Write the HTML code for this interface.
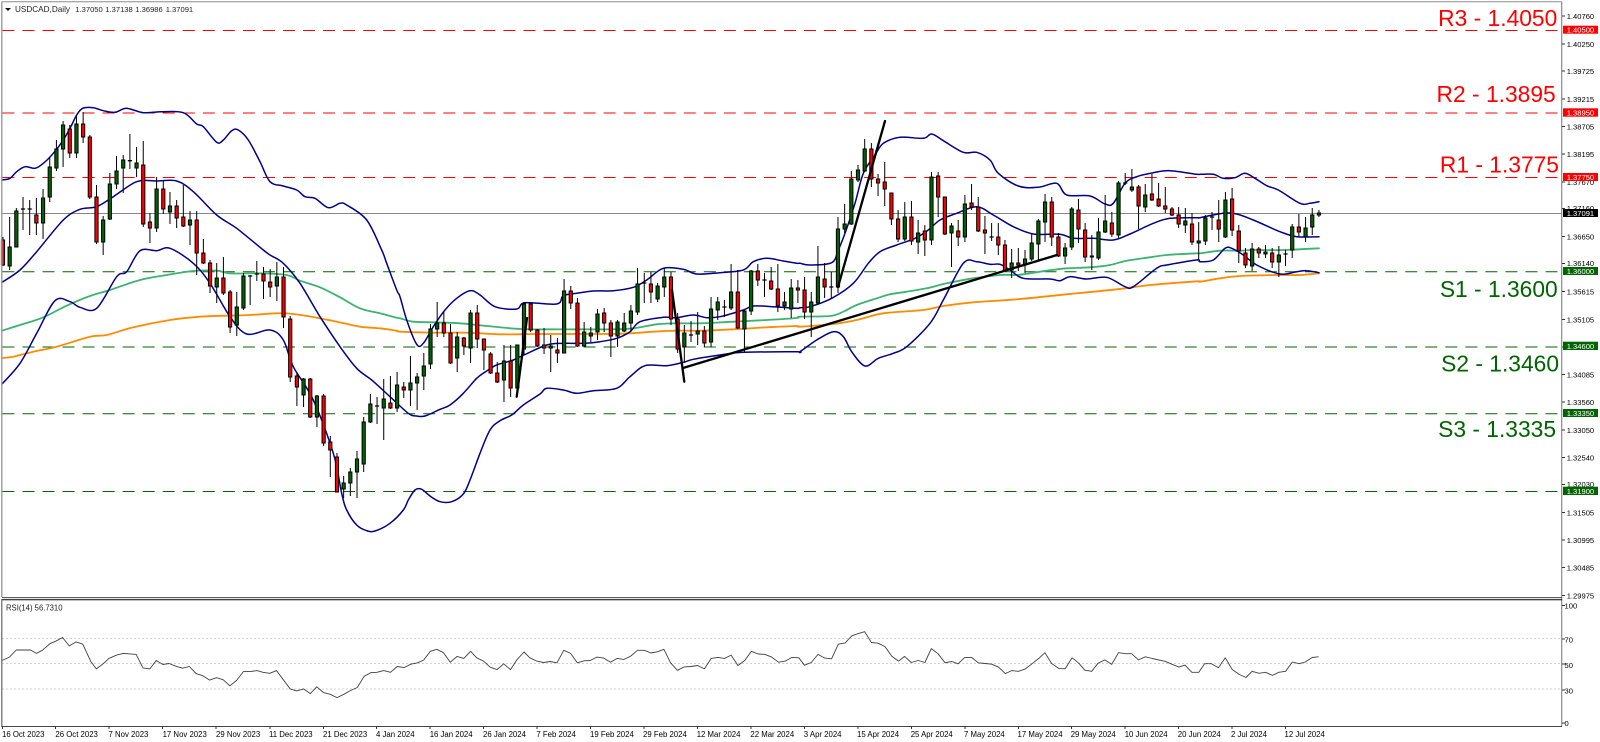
<!DOCTYPE html>
<html><head><meta charset="utf-8"><title>USDCAD,Daily</title>
<style>
html,body{margin:0;padding:0;background:#fff;width:1600px;height:742px;overflow:hidden}
svg{position:absolute;left:0;top:0;display:block}
text{font-family:"Liberation Sans",sans-serif}
.a{font-size:7.6px;fill:#000}
.t{font-size:7.6px;fill:#fff}
.d{font-size:7.8px;fill:#000}
.b{font-size:22.8px;text-anchor:end}
</style></head><body>
<svg id="c" width="1600" height="742" viewBox="0 0 1600 742" xmlns="http://www.w3.org/2000/svg">
<rect width="1600" height="742" fill="#fff"/>
<g id="levels" fill="none" stroke-width="1" stroke-dasharray="12 8.04">
<path d="M2.4 30.5H1562" stroke="#ff0000"/>
<path d="M2.4 113H1562" stroke="#ff0000"/>
<path d="M2.4 177.5H1562" stroke="#ff0000"/>
<path d="M2.4 271.8H1562" stroke="#006400"/>
<path d="M2.4 347H1562" stroke="#006400"/>
<path d="M2.4 413.8H1562" stroke="#006400"/>
<path d="M2.4 491.5H1562" stroke="#006400"/>
</g>
<path d="M2 213.5H1562" stroke="#868686" stroke-width="1"/>
<g stroke="#d2d2d2" stroke-width="1" stroke-dasharray="2 2">
<path d="M2 638.5H1562"/><path d="M2 663.5H1562"/><path d="M2 689H1562"/>
</g>
<g id="chart"></g>
<!-- frames -->
<g fill="none">
<path d="M2 1.7H1561.5" stroke="#8c8c8c" stroke-width="1"/>
<path d="M1.8 1.5V597" stroke="#9a9a9a" stroke-width="1.4"/>
<path d="M1561.7 1.5V726" stroke="#8a8a8a" stroke-width="1.2"/>
<path d="M2 597.6H1562" stroke="#444" stroke-width="1"/>
<path d="M2 599.7H1562" stroke="#000" stroke-width="1"/>
<path d="M1.8 599V727" stroke="#666" stroke-width="1.2"/>
<path d="M2 726.5H1562" stroke="#444" stroke-width="1"/>
</g>
<g stroke="#333" stroke-width="1">
<path d="M1562 16h3M1562 44h3M1562 71h3M1562 99h3M1562 126.5h3M1562 154h3M1562 182h3M1562 208.5h3M1562 236.5h3M1562 263.5h3M1562 291.5h3M1562 319.5h3M1562 347h3M1562 374.5h3M1562 402h3M1562 430h3M1562 457.5h3M1562 484.5h3M1562 512.5h3M1562 540h3M1562 567.5h3M1562 595.5h3"/>
<path d="M1562 605.5h3M1562 639h3M1562 664h3M1562 690h3M1562 723h3"/>
<path d="M2.5 726v3M55.5 726v3M109 726v3M162.5 726v3M216 726v3M270 726v3M323.5 726v3M376.5 726v3M430 726v3M483.5 726v3M537 726v3M590.5 726v3M644 726v3M697.5 726v3M751 726v3M804.5 726v3M858 726v3M911.5 726v3M965 726v3M1018.5 726v3M1071.5 726v3M1125 726v3M1178.5 726v3M1232 726v3M1285.5 726v3"/>
</g>
<!-- header -->
<path d="M5 8h6l-3 3z" fill="#111"/>
<text x="15" y="12" font-size="8.2" fill="#222" textLength="55" lengthAdjust="spacingAndGlyphs">USDCAD,Daily</text>
<text x="75.3" y="12" font-size="7.6" fill="#222">1.37050</text>
<text x="105.3" y="12" font-size="7.6" fill="#222">1.37138</text>
<text x="135.3" y="12" font-size="7.6" fill="#222">1.36986</text>
<text x="165.7" y="12" font-size="7.6" fill="#222">1.37091</text>
<text x="6" y="610.5" font-size="7.8" fill="#222" textLength="56.5" lengthAdjust="spacingAndGlyphs">RSI(14) 56.7310</text>
<!-- axis -->
<g>
<text class="a" x="1566.7" y="19">1.40760</text>
<text class="a" x="1566.7" y="47">1.40250</text>
<text class="a" x="1566.7" y="74">1.39725</text>
<text class="a" x="1566.7" y="102">1.39215</text>
<text class="a" x="1566.7" y="129.3">1.38705</text>
<text class="a" x="1566.7" y="157">1.38195</text>
<text class="a" x="1566.7" y="185">1.37670</text>
<text class="a" x="1566.7" y="211">1.37160</text>
<text class="a" x="1566.7" y="239.7">1.36650</text>
<text class="a" x="1566.7" y="266">1.36140</text>
<text class="a" x="1566.7" y="294.7">1.35615</text>
<text class="a" x="1566.7" y="322.3">1.35105</text>
<text class="a" x="1566.7" y="377.7">1.34085</text>
<text class="a" x="1566.7" y="405">1.33560</text>
<text class="a" x="1566.7" y="433">1.33050</text>
<text class="a" x="1566.7" y="460.3">1.32540</text>
<text class="a" x="1566.7" y="487">1.32030</text>
<text class="a" x="1566.7" y="515.7">1.31505</text>
<text class="a" x="1566.7" y="543">1.30995</text>
<text class="a" x="1566.7" y="570.7">1.30485</text>
<text class="a" x="1566.7" y="598.5">1.29975</text>
<text class="a" x="1564.5" y="608.7">100</text>
<text class="a" x="1564.5" y="642.5">70</text>
<text class="a" x="1564.5" y="667.8">50</text>
<text class="a" x="1564.5" y="693.4">30</text>
<text class="a" x="1564.5" y="726">0</text>
</g>
<!-- price tags -->
<g>
<rect x="1563" y="25.7" width="35" height="8" fill="#ff0000"/><text class="t" x="1566.7" y="32.6">1.40500</text>
<rect x="1563" y="108.3" width="35" height="8.4" fill="#ff0000"/><text class="t" x="1566.7" y="115.4">1.38950</text>
<rect x="1563" y="173" width="35" height="8" fill="#ff0000"/><text class="t" x="1566.7" y="180">1.37750</text>
<rect x="1563" y="209" width="35" height="8" fill="#000"/><text class="t" x="1566.7" y="216">1.37091</text>
<rect x="1563" y="267" width="35" height="8" fill="#006400"/><text class="t" x="1566.7" y="274">1.36000</text>
<rect x="1563" y="341.7" width="35" height="8.3" fill="#006400"/><text class="t" x="1566.7" y="349">1.34600</text>
<rect x="1563" y="409" width="35" height="8" fill="#006400"/><text class="t" x="1566.7" y="416">1.33350</text>
<rect x="1563" y="486.7" width="35" height="8.3" fill="#006400"/><text class="t" x="1566.7" y="494">1.31900</text>
</g>
<!-- big labels -->
<g>
<text class="b" x="1557.3" y="26" fill="#ff0000">R3 - 1.4050</text>
<text class="b" x="1555.7" y="102" fill="#ff0000">R2 - 1.3895</text>
<text class="b" x="1559" y="172.3" fill="#ff0000">R1 - 1.3775</text>
<text class="b" x="1557.7" y="297" fill="#006400">S1 - 1.3600</text>
<text class="b" x="1559" y="371.3" fill="#006400">S2 - 1.3460</text>
<text class="b" x="1556" y="437" fill="#006400">S3 - 1.3335</text>
</g>
<!-- dates -->
<g>
<text class="d" x="2" y="737">16 Oct 2023</text>
<text class="d" x="55.4" y="737">26 Oct 2023</text>
<text class="d" x="108.5" y="737">7 Nov 2023</text>
<text class="d" x="162.6" y="737">17 Nov 2023</text>
<text class="d" x="216" y="737">29 Nov 2023</text>
<text class="d" x="269" y="737">11 Dec 2023</text>
<text class="d" x="323" y="737">21 Dec 2023</text>
<text class="d" x="376" y="737">4 Jan 2024</text>
<text class="d" x="429.7" y="737">16 Jan 2024</text>
<text class="d" x="483" y="737">26 Jan 2024</text>
<text class="d" x="536.4" y="737">7 Feb 2024</text>
<text class="d" x="590" y="737">19 Feb 2024</text>
<text class="d" x="643" y="737">29 Feb 2024</text>
<text class="d" x="696.7" y="737">12 Mar 2024</text>
<text class="d" x="750.4" y="737">22 Mar 2024</text>
<text class="d" x="803.8" y="737">3 Apr 2024</text>
<text class="d" x="857" y="737">15 Apr 2024</text>
<text class="d" x="910.7" y="737">25 Apr 2024</text>
<text class="d" x="964" y="737">7 May 2024</text>
<text class="d" x="1017.5" y="737">17 May 2024</text>
<text class="d" x="1070.7" y="737">29 May 2024</text>
<text class="d" x="1124.7" y="737">10 Jun 2024</text>
<text class="d" x="1177.8" y="737">20 Jun 2024</text>
<text class="d" x="1231" y="737">2 Jul 2024</text>
<text class="d" x="1284.5" y="737">12 Jul 2024</text>
</g>
</svg>
<script>
(function(){
var NS="http://www.w3.org/2000/svg",g=document.getElementById("chart");
function seg(ox,oy,s,a){var o=[];for(var i=0;i<a.length;i+=2){o.push([ox+a[i]/s,oy+a[i+1]/s]);}return o;}
function mk(dd,col,w,op){var p=document.createElementNS(NS,"path");p.setAttribute("d",dd);p.setAttribute("fill","none");p.setAttribute("stroke",col);p.setAttribute("stroke-width",w);p.setAttribute("stroke-linejoin","round");p.setAttribute("stroke-linecap","round");if(op)p.setAttribute("opacity",op);g.appendChild(p);}
function pl(pts,col,w,op){mk("M"+pts.map(function(q){return q[0].toFixed(1)+" "+q[1].toFixed(1);}).join("L"),col,w,op);}
function sm(pts,col,w){var dd="M"+pts[0][0].toFixed(1)+" "+pts[0][1].toFixed(1);for(var i=0;i<pts.length-1;i++){var a=pts[Math.max(i-1,0)],b=pts[i],c=pts[i+1],e=pts[Math.min(i+2,pts.length-1)];dd+="C"+(b[0]+(c[0]-a[0])/6).toFixed(1)+" "+(b[1]+(c[1]-a[1])/6).toFixed(1)+" "+(c[0]-(e[0]-b[0])/6).toFixed(1)+" "+(c[1]-(e[1]-b[1])/6).toFixed(1)+" "+c[0].toFixed(1)+" "+c[1].toFixed(1);}mk(dd,col,w);}
var G=[].concat(
seg(0,240,3,[6,272,60,255,130,232,200,197,270,168,330,150,420,120,500,105,580,93,650,92,690,100,780,100,860,105,900,122,960,142,1020,172,1080,205,1140,220,1190,233]),
seg(400,230,3,[0,265,40,275,100,277,180,280,260,288,360,297,450,298,550,298,640,298,700,295,770,283,830,280,900,280,1000,275,1100,270,1190,264]),
seg(800,110,3,[0,620,90,618,130,605,170,585,230,565,270,553,320,545,380,535,440,520,520,505,600,495,650,495,690,490,740,482,800,475,870,472,930,465,980,452,1050,442,1100,435,1190,430]),
seg(1200,0,3,[0,760,60,752,120,752,160,750,250,750,357,745]));
var O=[].concat(
seg(0,240,3,[6,354,40,350,100,335,170,320,270,290,320,285,400,262,510,240,600,230,680,227,750,225,830,220,880,222,950,233,1000,243,1080,260,1140,265,1190,272]),
seg(400,230,3,[0,305,100,308,200,308,300,313,400,312,500,312,600,312,690,310,760,305,830,302,900,302,1000,298,1100,292,1190,288]),
seg(800,110,3,[0,650,100,642,170,630,250,610,370,600,430,588,520,577,650,568,800,553,950,538,1050,525,1190,514]),
seg(1200,0,3,[0,845,60,835,120,828,230,825,300,825,357,820]));
var U=[].concat(
seg(0,0,3,[6,540,30,535,50,515,75,500,105,505,130,490,160,460,190,420,215,375,230,345,248,325,280,323,310,332,345,337,380,325,430,338,485,335,550,338,590,372,610,380,650,427,670,420,695,392,715,390,745,420,780,485,810,545,850,558,890,570,915,590,945,595,985,623,1020,610,1040,615,1100,660,1145,750]),
seg(0,240,3,[1160,70,1190,150]),
seg(400,230,3,[0,200,20,270,50,343,70,340,100,290,135,240,170,205,210,182,240,195,285,230,350,237,375,218,470,222,490,197,530,190,580,183,640,182,700,172,740,150,790,115,850,118,890,132,960,128,1030,120,1060,95,1100,85,1150,93,1190,100]),
seg(800,110,3,[0,460,30,465,95,458,115,420,135,370,165,280,190,190,225,135,250,100,300,82,370,85,395,72,430,92,490,127,530,127,570,150,595,190,655,228,715,232,770,220,800,255,870,258,915,282,940,280,975,220,1010,200,1060,188,1110,182,1190,193]),
seg(1200,0,3,[0,523,40,523,70,535,105,533,135,520,165,535,200,557,235,570,300,610,330,610,357,605]));
var M=[].concat(
seg(0,240,3,[6,127,60,90,110,35]),
seg(0,0,3,[190,660,240,628,290,620,340,590,410,545,470,543,530,543,580,575,650,645,710,685,790,750]),
seg(0,240,3,[810,45,850,70,900,130,960,230,1020,320,1070,385]),
seg(340,370,3,[95,30,150,80,205,130,230,138,255,138,300,118,330,105,370,70,410,25,440,3]),
seg(400,230,3,[290,405,340,390,372,375,440,345,490,340,550,340,600,335,650,325,690,305,720,275,790,262,830,263,880,255,920,263,960,260,1030,240,1060,228,1120,230,1190,235]),
seg(800,110,3,[0,593,30,590,95,565,160,520,205,460,240,425,290,405,345,385,385,360,420,330,470,310,530,290,580,315,640,350,700,372,780,373,820,385,880,385,940,390,990,372,1060,340,1110,325,1190,323]),
seg(1200,0,3,[0,653,70,640,110,642,160,660,240,695,290,710,357,710]));
var L=[].concat(
seg(0,240,3,[6,432,60,370,110,280,165,182,210,185,240,202,290,205,350,110,380,95,420,32,470,32,510,25,580,70,630,130,690,230,740,282,810,270,850,300,880,380,940,480,1000,640]),
seg(340,370,3,[5,370,20,420,50,465,80,482,105,483,150,460,190,420,205,390,225,360,245,358,270,378,300,395,335,395,370,372,390,330,420,250,450,180,480,152,515,135,550,105,600,72]),
seg(400,230,3,[440,475,490,480,530,490,580,482,650,475,690,440,735,407,800,407,850,397,880,388,960,375,1030,367,1190,365]),
seg(800,110,3,[0,725,50,690,100,665,130,680,155,725,195,768,235,745,280,730,320,710,390,640,430,570,490,460,530,455,570,463,600,463,630,480,670,505,750,507,780,512,810,500,860,507,920,502,975,530,1000,530,1070,475,1100,465,1190,450]),
seg(1200,0,3,[0,785,40,780,75,745,95,745,130,765,170,795,240,822,290,815,320,812,357,818]));
sm(G,"#3cb371",1.8);sm(O,"#ff8c00",1.8);
sm(U,"#00008b",1.5);sm(M,"#00008b",1.5);sm(L,"#00008b",1.5);
var d="r240,265,237,266;g247,266,217,270;g211,247,208,247;d209,197,230;d209,200,235;r215,223,198,235;g198,223,189,239;g167,197,157,202;g149,168,140,171;g125,149,121,167;r129,153,125,158;g124,153,115,158;r124,137,112,143;r137,197,135,199;r197,242,185,244;g220,242,216,255;g184,219,173,220;g171,184,156,189;g160,168,155,193;d160.7,134,169;g163,168,147,177;r165,224,141,227;r222,228,213,243;g189,228,177,232;r189,209,180,214;g206,212,192,224;r206,218,200,228;r217,226,185,227;g220,225,211,245;r220,253,211,275;r253,263,239,264;r263,286,260,293;g278,287,263,303;r278,293,257,295;r292,327,290,333;g307,325,292,336;g276,308,273,310;d276,275,305;d274,261,281;r274,281,267,299;r282,287,269,297;g277,286,262,301;r277,317,267,328;r319,377,316,382;r376,387,373,406;g379,395,378,407;r379,417,378,418;g396,417,395,427;r396,443,394,446;r442,450,436,477;r457,492,453,492;g483,489,476,498;g472,483,468,496;g459,472,451,498;g422,464,417,472;g404,422,394,423;d406,397,424;g399,408,379,440;r403,408,376,409;g385,408,372,412;r387,390,382,398;g383,390,356,406;g377,383,373,410;g366,376,353,390;g329,364,324,369;g323,329,302,337;r323,333,312,337;r333,363,324,364;g337,358,332,372;r338,346,337,355;g313,348,310,363;r313,339,305,348;r339,350,339,370;r354,373,352,374;r373,382,362,383;g361,380,345,402;r361,388,345,397;g345,388,345,395;g304,349,302,355;r304,330,302,332;r330,346,329,347;r345,348,328,354;g346,348,335,372;r350,353,338,363;g291,353,279,353;r291,303,286,309;r303,346,298,347;g332,346,322,347;g333,336,327,342;g314,332,309,340;r313,323,308,332;r323,336,320,357;g322,336,320,347;g323,331,313,332;g311,323,305,332;g284,312,268,315;d283,273,303;r284,292,272,303;g286,299,283,302;g277,287,268,297;r277,319,272,325;r319,349,313,353;g333,347,325,363;d335,321,342;g331,334,312,345;r331,343,326,347;g309,342,297,347;g302,310,297,320;d307,300,317;g292,308,264,310;r292,328,270,329;g311,329,310,352;g271,311,270,315;r271,280,264,286;d280,273,297;r281,289,267,290;r289,306,264,312;g302,306,292,310;g288,309,279,318;r288,290,280,303;r290,312,277,319;g302,312,292,337;g277,303,246,303;r279,287,263,298;d287,272,298;g229,287,217,293;g224,229,204,233;g179,224,171,225;g170,180,165,182;g149,171,139,172;r149,179,143,187;r179,183,174,196;r182,189,162,206;r193,219,193,225;r219,239,210,242;g217,239,202,241;r217,241,201,245;g233,242,220,254;r231,240,225,256;g177,240,172,245;r176,197,172,217;r197,234,197,235;g226,233,223,267;r231,237,220,246;g204,237,195,242;r203,207,184,210;r207,231,197,232;r230,233,216,254;d237,223,241;r237,245,223,255;r245,270,240,272;g263,270,249,278;r263,265,248,271;g259,265,250,273;g243,259,233,261;g221,244,219,260;g202,222,194,242;r202,237,197,246;r237,256,233,257;g248,256,243,264;g209,247,207,250;r210,229,199,243;r230,257,223,262;r256,257,235,270;g232,258,218,260;g221,232,195,233;r223,234,212,237;g183,235,181,238;d183,173,185;g187,190,169,192;r187,206,185,229;g195,207,184,212;r194,200,174,201;r199,206,183,207;r206,209,187,213;r209,215,207,216;r215,224,207,228;g221,225,208,233;r224,242,213,245;g241,243,222,260;g218,241,215,245;d217,212,230;r220,229,200,242;g200,237,192,238;r199,230,188,236;r231,251,225,263;r253,265,248,268;g249,266,243,271;r249,253,247,258;g252,254,245,258;r253,262,248,268;g255,262,246,277;d254,250,266;g227,250,224,258;r227,232,214,237;g228,237,217,242;g215,227,208,235;g213,215,210,217".split(";");
var w="",gb="",rb="",db="";
for(var i=0;i<d.length;i++){
var s=d[i],t=s[0],v=s.slice(1).split(",").map(Number),x=2.97+6.68*i;
if(t==="d"){w+="M"+x.toFixed(2)+" "+v[1]+"V"+v[2];db+="M"+(x-2.1).toFixed(2)+" "+v[0]+"h4.2";continue;}
w+="M"+x.toFixed(2)+" "+v[2]+"V"+v[3];
var b="M"+(x-1.6).toFixed(2)+" "+v[0]+"h3.2V"+v[1]+"h-3.2z";
if(t==="g")gb+=b;else rb+=b;
}
function pth(dd,f,st,sw){var p=document.createElementNS(NS,"path");p.setAttribute("d",dd);p.setAttribute("fill",f);if(st){p.setAttribute("stroke",st);p.setAttribute("stroke-width",sw);}g.appendChild(p);}
pth(w,"none","#000",1);
pth(gb,"#006400","#000",1);
pth(rb,"#ff0000","#000",1);
pth(db,"none","#000",1.3);
pl([[516.7,396.7],[527,318]],"#000",2.3);
pl([[672,290],[684.3,381.7]],"#000",2.3);
pl([[683,368],[1057,255]],"#000",2.3);
pl([[838,287],[885,121]],"#000",2.3);
var R=[].concat(
seg(0,580,2.958,[6,238,28,228,48,207,90,207,108,217,125,208,148,188,165,181,185,170,205,195,225,183,245,190,268,240,285,263,305,248,322,232,345,222,365,217,403,220,423,260,443,263,462,238,482,250,500,247,520,255,540,261,560,256,580,277,600,283,620,296,640,289,660,295,680,313,700,297,720,271,740,271,760,268,778,273,798,276,818,268,838,295,858,322,878,328,898,322,918,336,937,316,957,333,977,338,997,348,1017,338,1037,327,1057,318,1077,285,1097,274,1115,273,1135,268,1155,273,1175,256,1195,259,1215,249,1235,245,1253,237,1273,211,1292,205,1312,215,1332,243,1352,226,1372,232,1392,211,1410,230,1430,240,1450,258,1470,265,1490,248,1510,265,1530,235,1550,213,1565,228]),
seg(530,580,2.958,[0,230,20,240,40,244,60,241,80,245,100,208,120,217,140,245,160,239,178,238,198,228,218,231,238,243,258,232,278,235,298,225,318,208,338,208,358,216,378,212,396,205,416,245,436,267,456,257,476,256,496,253,516,263,536,232,556,229,576,232,595,222,615,253,635,238,655,211,675,219,695,220,715,228,735,243,755,240,775,229,795,230,812,252,832,244,852,220,872,231,892,233,912,190,932,186,952,165,972,158,990,153,1010,185,1030,187,1050,197,1070,225,1090,240,1108,226,1128,244,1148,238,1168,244,1187,203,1207,218,1228,245,1248,241,1266,248,1286,229,1306,229,1326,245,1346,247,1366,249,1386,258,1406,277,1425,268,1445,270,1465,263,1485,248,1505,232,1523,215,1543,247,1565,262]),
seg(1060,580,2.904,[15,258,35,226,55,242,72,262,92,265,110,242,130,232,150,245,170,211,190,214,208,214,228,232,248,223,268,228,305,236,345,253,363,247,383,268,403,268,420,243,440,243,460,255,480,226,500,260,520,274,540,283,558,265,578,271,597,268,617,277,635,268,655,265,675,238,695,243,712,238,732,225,750,223]));
pl(R,"#000",0.9,0.75);
})();
</script>
</body></html>
